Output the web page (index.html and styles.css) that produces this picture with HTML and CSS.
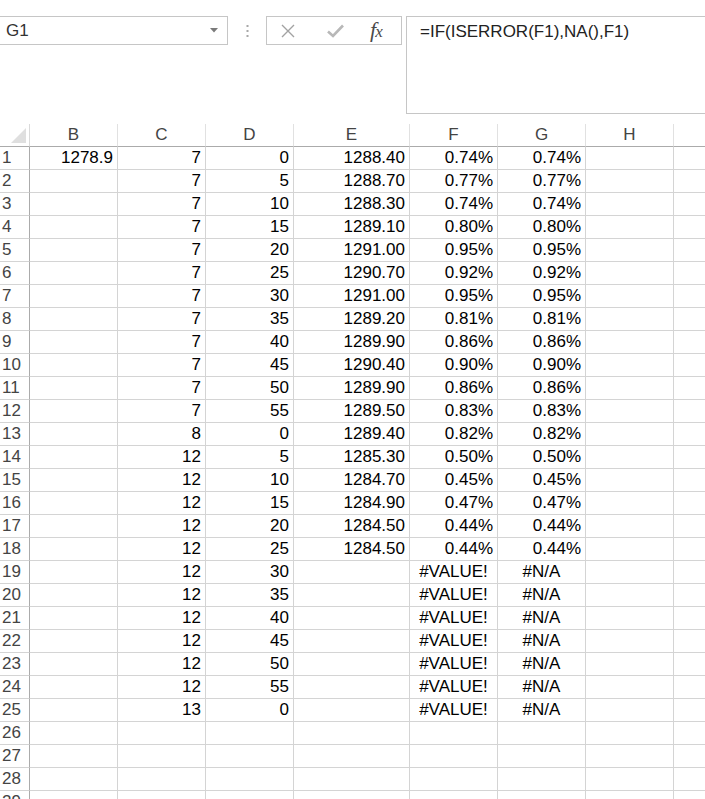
FILE: index.html
```html
<!DOCTYPE html>
<html lang="en">
<head>
    <meta charset="UTF-8">
    <title>Sheet - G1</title>
    <link rel="stylesheet" href="styles.css">
</head>
<body>
    <div class="formula-bar">
        <div class="name-box">
            <span class="name-text">G1</span>
            <svg class="name-arrow" width="8" height="5" viewBox="0 0 8 5"><polygon points="0,0 8,0 4,4.5" fill="#7a7a7a"/></svg>
        </div>
        <div class="grip">
            <svg width="3" height="12" viewBox="0 0 3 12">
                <rect x="0.5" y="0" width="2" height="2" fill="#a8a8a8"/>
                <rect x="0.5" y="5" width="2" height="2" fill="#a8a8a8"/>
                <rect x="0.5" y="10" width="2" height="2" fill="#a8a8a8"/>
            </svg>
        </div>
        <div class="fx-box">
            <svg class="icon-cancel" width="14" height="14" viewBox="0 0 14 14">
                <path d="M1 1 L13 13 M13 1 L1 13" stroke="#a2a2a2" stroke-width="1.4" fill="none"/>
            </svg>
            <svg class="icon-enter" width="17" height="14" viewBox="0 0 17 14">
                <path d="M1 7.5 L6 12 L16 1.5" stroke="#b8b8b8" stroke-width="2.6" fill="none"/>
            </svg>
            <span class="fx">f<span class="fx-x">x</span></span>
        </div>
        <div class="formula-box">=IF(ISERROR(F1),NA(),F1)</div>
    </div>

    <div class="sheet" id="sheet">
        <div class="corner"><div class="corner-tri"></div></div>
        <div class="col-head">B</div>
        <div class="col-head">C</div>
        <div class="col-head">D</div>
        <div class="col-head">E</div>
        <div class="col-head">F</div>
        <div class="col-head">G</div>
        <div class="col-head">H</div>
        <div class="col-head last"></div>
    </div>

    <script>
        // B, C, D, E, F, G
        const rows = [
            ['1278.9', 7, 0, '1288.40', '0.74%', '0.74%'],
            ['', 7, 5, '1288.70', '0.77%', '0.77%'],
            ['', 7, 10, '1288.30', '0.74%', '0.74%'],
            ['', 7, 15, '1289.10', '0.80%', '0.80%'],
            ['', 7, 20, '1291.00', '0.95%', '0.95%'],
            ['', 7, 25, '1290.70', '0.92%', '0.92%'],
            ['', 7, 30, '1291.00', '0.95%', '0.95%'],
            ['', 7, 35, '1289.20', '0.81%', '0.81%'],
            ['', 7, 40, '1289.90', '0.86%', '0.86%'],
            ['', 7, 45, '1290.40', '0.90%', '0.90%'],
            ['', 7, 50, '1289.90', '0.86%', '0.86%'],
            ['', 7, 55, '1289.50', '0.83%', '0.83%'],
            ['', 8, 0, '1289.40', '0.82%', '0.82%'],
            ['', 12, 5, '1285.30', '0.50%', '0.50%'],
            ['', 12, 10, '1284.70', '0.45%', '0.45%'],
            ['', 12, 15, '1284.90', '0.47%', '0.47%'],
            ['', 12, 20, '1284.50', '0.44%', '0.44%'],
            ['', 12, 25, '1284.50', '0.44%', '0.44%'],
            ['', 12, 30, '', '#VALUE!', '#N/A'],
            ['', 12, 35, '', '#VALUE!', '#N/A'],
            ['', 12, 40, '', '#VALUE!', '#N/A'],
            ['', 12, 45, '', '#VALUE!', '#N/A'],
            ['', 12, 50, '', '#VALUE!', '#N/A'],
            ['', 12, 55, '', '#VALUE!', '#N/A'],
            ['', 13, 0, '', '#VALUE!', '#N/A']
        ];

        const sheet = document.getElementById('sheet');

        function addCell(cls, text) {
            const div = document.createElement('div');
            div.className = cls;
            div.textContent = text;
            sheet.appendChild(div);
        }

        for (let r = 1; r <= 29; r++) {
            const data = rows[r - 1] || ['', '', '', '', '', ''];
            addCell('row-head', r);
            data.forEach(v => {
                const s = String(v);
                addCell(s.startsWith('#') ? 'cell err' : 'cell', s);
            });
            addCell('cell', '');
            addCell('cell last', '');
        }
    </script>
</body>
</html>
```

FILE: styles.css
```css
body {
    margin: 0;
    background: #fff;
    font-family: "Liberation Sans", Arial, sans-serif;
    color: #000;
    overflow: hidden;
}
.formula-bar {
    display: flex;
    align-items: flex-start;
    padding-top: 16px;
    height: 108px;
}
.formula-bar > div {
    flex-shrink: 0;
}
.name-box {
    box-sizing: border-box;
    width: 229px;
    height: 29px;
    margin-left: -1px;
    border: 1px solid #c6c6c6;
    display: flex;
    align-items: center;
    justify-content: space-between;
    padding: 0 9px 0 6px;
}
.name-text {
    font-size: 17px;
    color: #333;
}
.grip {
    width: 38px;
    height: 29px;
    display: flex;
    align-items: center;
    justify-content: center;
}
.fx-box {
    box-sizing: border-box;
    width: 136px;
    height: 29px;
    border: 1px solid #c6c6c6;
    display: flex;
    align-items: center;
    padding-left: 14px;
}
.icon-cancel {
    margin-right: 32px;
}
.icon-enter {
    margin-right: 26px;
}
.fx {
    font-family: "Liberation Serif", "Times New Roman", serif;
    font-style: italic;
    font-size: 22px;
    line-height: 22px;
    color: #4a4a4a;
    letter-spacing: -1px;
}
.fx-x {
    font-size: 17px;
}
.formula-box {
    box-sizing: border-box;
    margin-left: 4px;
    width: 299px;
    height: 98px;
    border: 1px solid #c6c6c6;
    border-right: none;
    padding: 5px 0 0 13px;
    font-size: 17px;
    color: #222;
}
.sheet {
    display: grid;
    grid-template-columns: 30px 88px 88px 88px 116px 88px 88px 88px 32px;
    grid-auto-rows: 23px;
}
.corner, .col-head, .row-head, .cell {
    box-sizing: border-box;
    font-size: 17px;
    line-height: 22px;
    white-space: nowrap;
    overflow: hidden;
}
.corner {
    border-right: 1px solid #dadada;
    border-bottom: 1px solid #ababab;
    position: relative;
}
.corner-tri {
    position: absolute;
    left: 11px;
    top: 4px;
    width: 0;
    height: 0;
    border-left: 15px solid transparent;
    border-bottom: 15px solid #dfdfdf;
}
.col-head {
    text-align: center;
    color: #444;
    border-right: 1px solid #e1e1e1;
    border-bottom: 1px solid #ababab;
}
.row-head {
    color: #444;
    padding-left: 2px;
    border-right: 1px solid #ababab;
    border-bottom: 1px solid #d4d4d4;
}
.cell {
    text-align: right;
    padding-right: 4px;
    border-right: 1px solid #d4d4d4;
    border-bottom: 1px solid #d4d4d4;
}
.cell.err {
    text-align: center;
    padding-right: 0;
}
.last {
    border-right: none;
}
```
